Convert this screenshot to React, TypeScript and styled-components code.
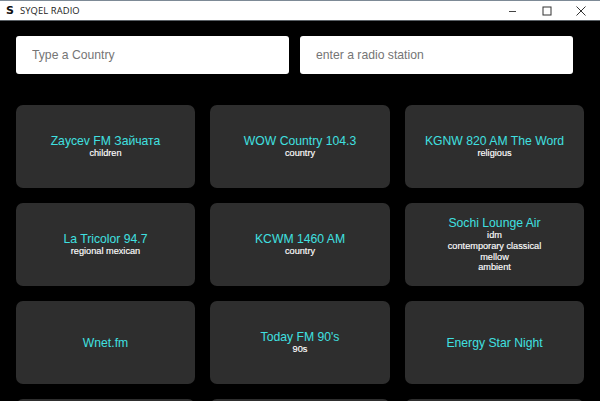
import React from "react";
import styled, { createGlobalStyle } from "styled-components";

const Global = createGlobalStyle`
  html, body { margin: 0; padding: 0; height: 100%; overflow: hidden; background: #000; }
  #root { height: 100%; }
`;
const Win = styled.div`
  width: 600px; height: 401px; overflow: hidden; background: #000;
  display: flex; flex-direction: column; font-family: "Liberation Sans", Arial, sans-serif;
`;
const TitleBar = styled.div`
  height: 19px; flex: none; box-sizing: content-box; background: #fff; border-top: 1px solid #7d8a96;
  border-bottom: 1px solid #5a6066;
  display: flex; align-items: center; padding-left: 6px; color: #222;
`;
const Logo = styled.span`
  font: 900 11px "DejaVu Sans", sans-serif; width: 14px; color: #111;
`;
const AppName = styled.span`
  font: 400 9.4px "Open Sans", "Liberation Sans", sans-serif; flex: 1; letter-spacing: 0.1px;
`;
const WinButton = styled.div`
  width: 34px; height: 19px; display: flex; align-items: center; justify-content: center;
  svg { display: block; }
`;
const Controls = styled.div`
  display: flex; margin-right: 2px;
`;
const Content = styled.div`
  flex: 1; display: flex; flex-direction: column; padding: 15px 16px 0; gap: 31px; min-height: 0;
`;
const SearchRow = styled.div`
  display: grid; grid-template-columns: 273px 273px; gap: 11px; flex: none;
`;
const Search = styled.input`
  height: 38px; box-sizing: border-box; border: none; outline: none; border-radius: 3px; background: #fff;
  padding: 0 16px; font: 12.2px "Liberation Sans", Arial, sans-serif; color: #333;
  &::placeholder { color: #757575; opacity: 1; }
`;
const Grid = styled.div`
  display: grid; grid-template-columns: 179px 180px 179px; grid-auto-rows: 83px; column-gap: 15px; row-gap: 15px;
`;
const Card = styled.div`
  background: #2e2e2e; border-radius: 7px; display: flex; flex-direction: column;
  align-items: center; justify-content: center; text-align: center;
`;
const Name = styled.div`
  color: #40e0e0; font-size: 12.2px; line-height: 14px;
`;
const Genre = styled.div`
  color: #fff; font-size: 9.2px; line-height: 10.6px; -webkit-text-stroke: 0.15px #fff;
`;

const stations: { name: string; genres: string[] }[] = [
  { name: "Zaycev FM Зайчата", genres: ["children"] },
  { name: "WOW Country 104.3", genres: ["country"] },
  { name: "KGNW 820 AM The Word", genres: ["religious"] },
  { name: "La Tricolor 94.7", genres: ["regional mexican"] },
  { name: "KCWM 1460 AM", genres: ["country"] },
  { name: "Sochi Lounge Air", genres: ["idm", "contemporary classical", "mellow", "ambient"] },
  { name: "Wnet.fm", genres: [] },
  { name: "Today FM 90's", genres: ["90s"] },
  { name: "Energy Star Night", genres: [] },
  { name: "", genres: [] },
  { name: "", genres: [] },
  { name: "", genres: [] },
];

export default function App() {
  return (
    <Win>
      <Global />
      <TitleBar>
        <Logo>S</Logo>
        <AppName>SYQEL RADIO</AppName>
        <Controls>
          <WinButton>
            <svg width="10" height="10" viewBox="0 0 10 10"><path d="M1 5.5h7" stroke="#444" strokeWidth="1" /></svg>
          </WinButton>
          <WinButton>
            <svg width="10" height="10" viewBox="0 0 10 10"><rect x="1" y="1" width="8" height="8" fill="none" stroke="#333" /></svg>
          </WinButton>
          <WinButton>
            <svg width="10" height="10" viewBox="0 0 10 10"><path d="M0.5 0.5l9 9M9.5 0.5l-9 9" stroke="#333" strokeWidth="1" /></svg>
          </WinButton>
        </Controls>
      </TitleBar>
      <Content>
        <SearchRow>
          <Search placeholder="Type a Country" />
          <Search placeholder="enter a radio station" />
        </SearchRow>
        <Grid>
          {stations.map((s, i) => (
            <Card key={i}>
              <Name>{s.name}</Name>
              {s.genres.map((g) => <Genre key={g}>{g}</Genre>)}
            </Card>
          ))}
        </Grid>
      </Content>
    </Win>
  );
}
